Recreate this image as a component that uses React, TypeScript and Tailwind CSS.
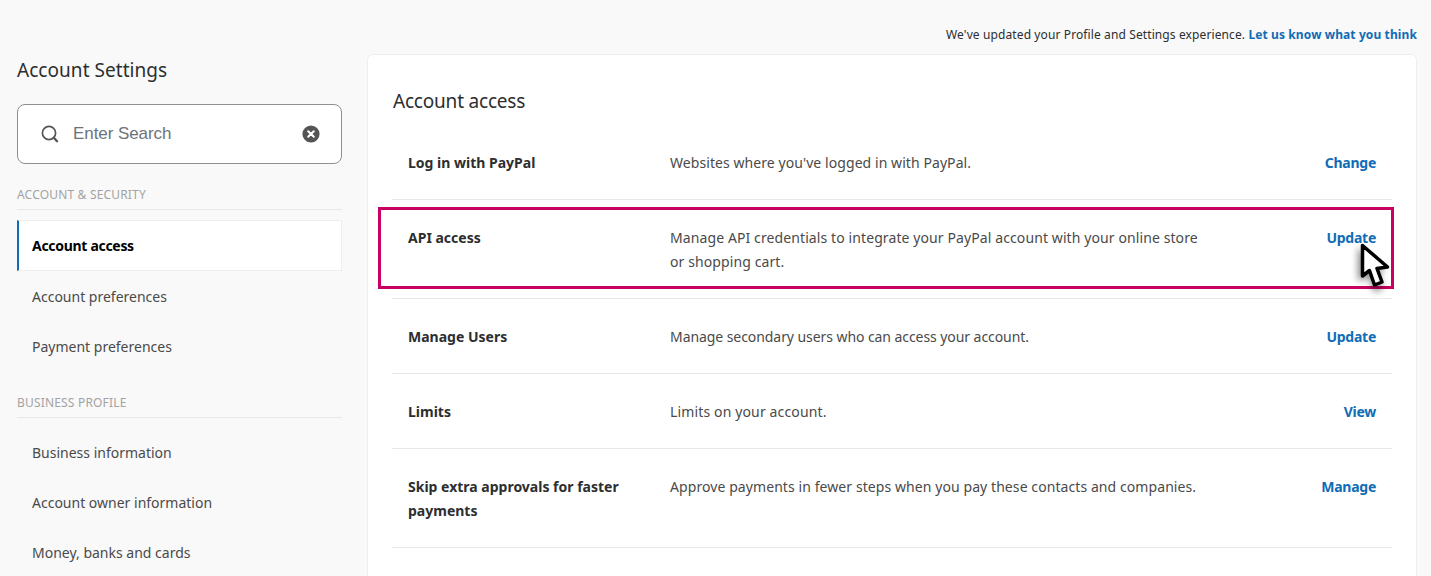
const font = { fontFamily: '"Noto Sans", sans-serif' }

const rows = [
  { title: 'Log in with PayPal', desc: "Websites where you've logged in with PayPal.", action: 'Change', descClass: 'tracking-[0.07px]' },
  { title: 'API access', desc: 'Manage API credentials to integrate your PayPal account with your online store or shopping cart.', action: 'Update', descClass: 'tracking-[0.1px]' },
  { title: 'Manage Users', desc: 'Manage secondary users who can access your account.', action: 'Update', descClass: 'tracking-[-0.07px]' },
  { title: 'Limits', desc: 'Limits on your account.', action: 'View', descClass: 'tracking-[0.14px]' },
  { title: 'Skip extra approvals for faster payments', desc: 'Approve payments in fewer steps when you pay these contacts and companies.', action: 'Manage', descClass: 'tracking-[0.08px]' },
]

function SideLink({ label }: { label: string }) {
  return <div className="h-[50px] pl-[15px] flex items-center text-[14px] text-[#4a4a4a]">{label}</div>
}

function SectionLabel({ label }: { label: string }) {
  return (
    <div className="h-[23px] border-b border-[#e8e8e8] text-[12px] leading-[16px] text-[#a3a3a3] tracking-[0.18px]">
      {label}
    </div>
  )
}

function Cursor() {
  return (
    <svg className="absolute left-[1345px] top-[235px] w-[55px] h-[65px]" viewBox="0 0 55 65">
      <defs>
        <filter id="cursorShadow" x="-60%" y="-40%" width="220%" height="180%">
          <feGaussianBlur stdDeviation="3.5" />
        </filter>
      </defs>
      <path d="M13 12 L13 46 L24 42 L29 57 L38 54 L33 38 L40 36 Z" fill="#000" opacity="0.45" filter="url(#cursorShadow)" />
      <path
        d="M17.5 10.5 L17.5 41 L24.5 35.5 L29.5 50 L37 47 L32 33.5 L42.5 32 Z"
        fill="#fff"
        stroke="#000"
        strokeWidth="3.5"
        strokeLinejoin="round"
      />
    </svg>
  )
}

export default function App() {
  return (
    <div className="relative h-[576px] overflow-hidden bg-[#f9f9f9] text-[#2c2e2f]" style={font}>
      <div className="h-[54px] pr-[14px] pt-[26px] text-right text-[12px] leading-[18px] text-[#2c2e2f] tracking-[0.11px]">
        We've updated your Profile and Settings experience.{' '}
        <a className="font-bold text-[#0f6cb5]">Let us know what you think</a>
      </div>

      <div className="flex pl-[17px] pr-[14px]">
        <aside className="w-[325px] shrink-0">
          <h2 className="mt-[2px] text-[19px] leading-[28px] text-[#2c2e2f] tracking-[0.05px]">Account Settings</h2>
          <div className="mt-[20px] h-[60px] rounded-[8px] border border-[#8f8f8f] bg-white flex items-center pl-[22px] pr-[21px]">
            <svg className="w-[20px] h-[20px] text-[#555]" viewBox="0 0 20 20" fill="none" stroke="currentColor">
              <circle cx="9" cy="9" r="6.6" strokeWidth="1.7" />
              <path d="M13.8 13.8 L17 17.2" strokeWidth="2.4" strokeLinecap="round" />
            </svg>
            <span className="ml-[13px] flex-1 text-[17px] tracking-[-0.08px] text-[#6c7378]" style={{ fontFamily: '"Liberation Sans", sans-serif' }}>
              Enter Search
            </span>
            <svg className="w-[18px] h-[18px]" viewBox="0 0 18 18">
              <circle cx="9" cy="9" r="8.6" fill="#555" />
              <path d="M6.2 6.2 L11.8 11.8 M11.8 6.2 L6.2 11.8" stroke="#fff" strokeWidth="2" strokeLinecap="round" />
            </svg>
          </div>

          <div className="mt-[23px]">
            <SectionLabel label="ACCOUNT & SECURITY" />
          </div>
          <div className="mt-[10px] h-[51px] border border-[#eeeeee] border-l-2 border-l-[#0f6cb5] bg-white pl-[13px] flex items-center text-[14px] font-bold text-black tracking-[-0.3px]">
            Account access
          </div>
          <SideLink label="Account preferences" />
          <SideLink label="Payment preferences" />

          <div className="mt-[24px]">
            <SectionLabel label="BUSINESS PROFILE" />
          </div>
          <div className="mt-[9px]">
            <SideLink label="Business information" />
            <SideLink label="Account owner information" />
            <SideLink label="Money, banks and cards" />
          </div>
        </aside>

        <main className="ml-[25px] flex-1 h-[560px] rounded-t-[6px] border border-[#eeeeee] bg-white px-[24px] pt-[32px]">
          <h1 className="pl-[1px] text-[19px] leading-[28px] text-[#2c2e2f] tracking-[-0.2px]">Account access</h1>
          <div className="mt-[10px]">
            {rows.map((row) => (
              <div key={row.title} className="flex border-b border-[#e8e8e8] pl-[16px] pr-[16px] pt-[26px] pb-[24px] text-[14px] leading-[24px]">
                <div className="w-[262px] shrink-0 pr-[30px] font-bold text-[#2c2e2f]">{row.title}</div>
                <div className={`w-[540px] shrink-0 text-[#4a4a4a] ${row.descClass}`}>{row.desc}</div>
                <a className="ml-auto font-bold text-[#0f6cb5] tracking-[-0.25px]">{row.action}</a>
              </div>
            ))}
          </div>
        </main>
      </div>

      {/* annotation over the API access row */}
      <div className="absolute left-[378px] top-[207px] w-[1016px] h-[82px] border-[3px] border-[#c9005f]" />
      <Cursor />
    </div>
  )
}
